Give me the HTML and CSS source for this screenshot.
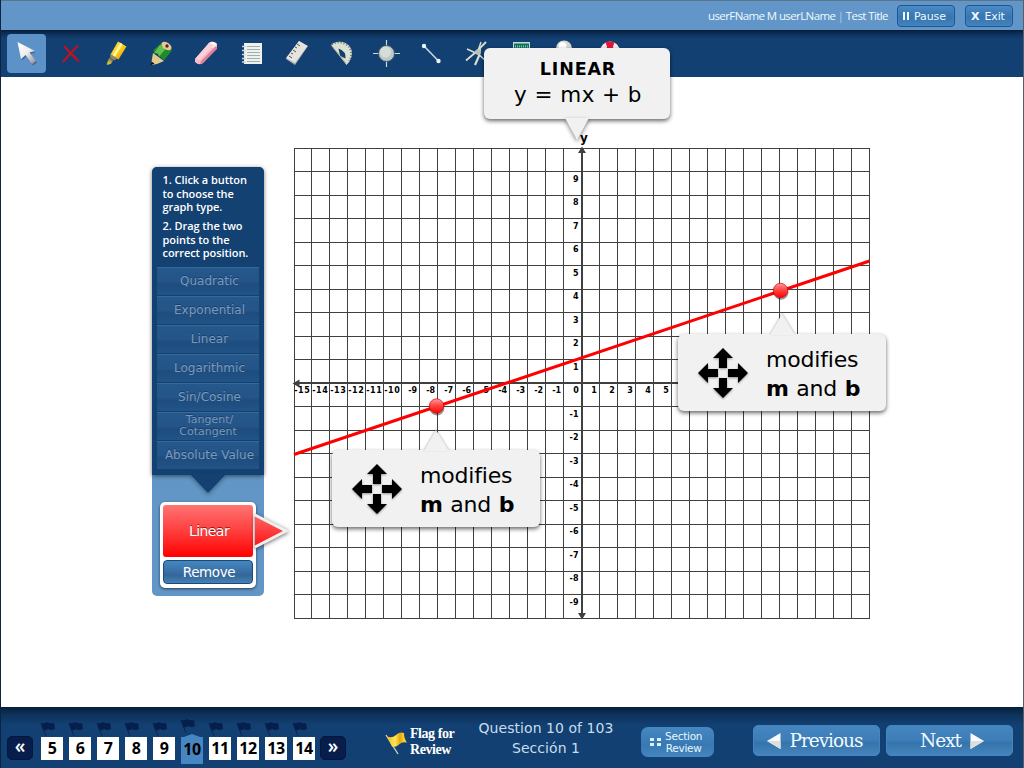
FILE: index.html
```html
<!DOCTYPE html>
<html lang="en">
<head>
<meta charset="utf-8">
<title>Test Title</title>
<link rel="stylesheet" href="styles.css">
</head>
<body>
<div class="app">
  <header class="topbar">
    <span class="user">userFName M userLName <i>|</i> Test Title</span>
    <button class="topbtn pause"><span class="bars"></span>Pause</button>
    <button class="topbtn exit"><b>X</b>Exit</button>
  </header>

  <nav class="tools">
    <svg class="tool selected" viewBox="0 0 39 39"><defs><linearGradient id="silver" x2="1" y2="1"><stop stop-color="#fff"/><stop offset=".5" stop-color="#eee"/><stop offset="1" stop-color="#8b8b90"/></linearGradient><linearGradient id="yellow" x2="1" y2="1"><stop stop-color="#ffd84a"/><stop offset=".5" stop-color="#ffd21c"/><stop offset="1" stop-color="#d18b00"/></linearGradient></defs><path d="M10.500 8L14 25l4.500-4 6.500 9 4-3-6.500-8.500 5.500-1.500z" fill="#17375f" opacity=".4" transform="translate(1 1.500)"/><path d="M10.500 8L14 25l4.500-4 6.500 9 4-3-6.500-8.500 5.500-1.500z" fill="url(#silver)"/></svg>
    <svg class="tool" viewBox="0 0 39 39"><path d="M12 12q7 8 15 15.500M26 11.500q-8 8-15 16.500" fill="none" stroke="#c8101b" stroke-width="2"/></svg>
    <svg class="tool" viewBox="0 0 39 39"><g transform="translate(-1 0)"><path d="M22 7.500l8.500 5-8 13-8-5z" fill="url(#yellow)"/><path d="M25.500 9.500l-8 13" stroke="#fff7a8" stroke-width="2.500"/><path d="M14.500 20l7 4.500-3.500 2-4-2.500z" fill="#8f8963"/><path d="M13 24l4 2.500-2 3.500-4.500.5z" fill="#99925a"/><path d="M12 27l3.500 1-1.500 2-3 1z" fill="#d5c02a"/></g></svg>
    <svg class="tool" viewBox="0 0 39 39"><path d="M11 19l11 8-7 3-6 1z" fill="#e2cb8c"/><path d="M19.500 9q3-1.500 7 1 4 3 3 7l-8 10q-1-4-4-4-1-4-5-3-1-3-1-4z" fill="#238a2c"/><path d="M18 11l-6 8q4-1 5 3.500l8-9z" fill="#61c052"/><ellipse cx="24.500" cy="12" rx="5.500" ry="3.500" transform="rotate(35 24.500 12)" fill="#e9c995"/><circle cx="25" cy="12" r="1.700" fill="#542922"/><path d="M9.500 27.500l3 2-4 2z" fill="#111"/></svg>
    <svg class="tool" viewBox="0 0 39 39"><path d="M22 9q4-3 8 1v4L16 29q-4 3-8-1v-3z" fill="#f7bdc9"/><path d="M14 27L28 13l2 0v2L16 29l-3 1z" fill="#e07f96"/><path d="M22 9q4-3 8 1l-4 4-6-2z" fill="#fff0ef"/><path d="M22 9L8 25l5 1 14-15z" fill="#fbd0d8"/></svg>
    <svg class="tool" viewBox="0 0 39 39"><path d="M12 9h18v21H12z" fill="#edf1ef"/><path d="M15 12.500h13M15 15.500h13M15 18.500h13M15 21.500h13M15 24.500h13M15 27.500h13" stroke="#8b9793" stroke-opacity=".75"/><path d="M10 12.500h4M10 16.500h4M10 20.500h4M10 24.500h4M10 28h4" stroke="#d5dad8" stroke-width="1.500"/></svg>
    <svg class="tool" viewBox="0 0 39 39"><path d="M22 7l9 5-13 19-9-6z" fill="#a9b0b3"/><path d="M22 7l8.500 5L18 29l-9-5z" fill="#e5e5de"/><path d="M20 10l3 2M18 13l2 1M16 16l3 2M14 19l2 1M12 22l3 2" stroke="#555"/></svg>
    <svg class="tool" viewBox="0 0 39 39"><path fill-rule="evenodd" d="M9 11C14 6 23 7 27.500 12q5 7 0 15.500L24.500 31z M16.500 14.500l1.500 7.500 5.500 2.500q1-7-7-10z" fill="#dde1d3"/><path d="M10 10.500C15 7 23 8 27 13q4.500 7 0 14" fill="none" stroke="#5d6d74" stroke-width="2" stroke-dasharray="1 2"/><path d="M10 12l14 17" stroke="#b8b695"/></svg>
    <svg class="tool" viewBox="0 0 39 39"><path d="M19.500 6v27M6 19.500h27" stroke="#c9dce0" stroke-width="1.200"/><circle cx="19.500" cy="19.500" r="8" fill="#b9c9c5" stroke="#456"/><circle cx="18.500" cy="18" r="5.500" fill="#d6dcd8"/></svg>
    <svg class="tool" viewBox="0 0 39 39"><path d="M12 12l14 14.500" stroke="#cad5dc" stroke-width="1.600"/><circle cx="12" cy="12" r="2.200" fill="#eaf6ff"/><circle cx="26.500" cy="27" r="2.200" fill="#eaf6ff"/></svg>
    <svg class="tool" viewBox="0 0 39 39"><g fill="none" stroke="#d9ddcf"><path d="M29 8L19 18l-10 8.500" stroke-width="1.800"/><path d="M23 14l-1 8-4 9" stroke-width="2.200"/><path d="M24 8l-3 9M10 15l11 5 8 7" stroke-width="1.500"/></g><circle cx="21" cy="18" r="2.800" fill="#b4c2bd"/></svg>
    <svg class="tool" viewBox="0 0 39 39"><path d="M11 8h17v24H11z" fill="#cad9d4"/><path d="M12 9.500h15v6H12z" fill="#176e62"/><path d="M13 12.500h13" stroke="#76d1a7" stroke-width="2" stroke-dasharray="1 1"/></svg>
    <svg class="tool" viewBox="0 0 39 39"><circle cx="17" cy="14.500" r="8" fill="#d4d6d3"/><circle cx="15.500" cy="12" r="4" fill="#fff"/></svg>
    <svg class="tool" viewBox="0 0 39 39"><circle cx="18" cy="17.500" r="7.500" fill="none" stroke="#f6eeee" stroke-width="5"/><path d="M13.500 8.500q4.500-2 9 0l-2 5.500h-5z" fill="#e3163a"/></svg>
  </nav>

  <main class="work">
    <aside class="panel">
      <section class="chooser">
        <p>1. Click a button<br>to choose the<br>graph type.</p>
        <p>2. Drag the two<br>points to the<br>correct position.</p>
        <div class="types">
          <button>Quadratic</button><button>Exponential</button><button>Linear</button><button>Logarithmic</button><button>Sin/Cosine</button><button class="two">Tangent/<br>Cotangent</button><button>Absolute Value</button>
        </div>
        <svg class="notch" viewBox="0 0 36 20"><path d="M0 0h36L18 19z" fill="#134171"/></svg>
      </section>
      <section class="chosen">
        <button class="current">Linear</button>
        <button class="remove">Remove</button>
        <svg class="pointer" viewBox="0 0 36 38"><defs><linearGradient id="redfill" x2="0" y2="1"><stop stop-color="#f66"/><stop offset="1" stop-color="#f11"/></linearGradient></defs><path d="M0 3l31 16L0 35z" fill="url(#redfill)"/><path d="M0 3l31 16L0 35" fill="none" stroke="#f0f0f0" stroke-width="3"/></svg>
      </section>
    </aside>

    <div class="plot">
      <svg class="graph" viewBox="294 130 577 490" id="graph">
        <defs><linearGradient id="dot" x2="0" y2="1"><stop stop-color="#ff9c9c"/><stop offset=".45" stop-color="#ff4747"/><stop offset="1" stop-color="#f00"/></linearGradient></defs>
        <g id="grid" class="grid"></g>
        <path class="axis" d="M582 151v465M296 383h573"/>
        <path class="head" d="M582 146.500l4 6.500h-8zM582 619.500l4-6.500h-8zM292.500 383.500l7-4v8z"/>
        <g id="labels" class="labels"></g>
        <text class="yname" x="580" y="142">y</text>
        <path class="curve" d="M294 454.500L869.500 261"/>
        <circle class="shade" cx="437" cy="408" r="7.500"/><circle class="dot" cx="436.500" cy="406" r="7.200"/>
        <circle class="shade" cx="781" cy="292.300" r="7.500"/><circle class="dot" cx="780.500" cy="290.500" r="7.200"/>
      </svg>
      <div class="callout formula"><strong>LINEAR</strong><span>y = mx + b</span><svg class="tail down" viewBox="0 0 24 23"><path d="M0 0h24L12 22z"/></svg></div>
      <div class="callout modify first"><svg class="tail up" viewBox="0 0 26 22"><path d="M12 1l13 21H0z"/></svg><svg class="move" viewBox="0 0 50 50"><path d="M25 0l10 10h-6v10h-8V10h-6zM25 50l10-10h-6V30h-8v10h-6zM0 25l10-10v6h10v8H10v6zM50 25L40 15v6H30v8h10v6z"/></svg><div>modifies<br><b>m</b> and <b>b</b></div></div>
      <div class="callout modify second"><svg class="tail up" viewBox="0 0 26 22"><path d="M12 1l13 21H0z"/></svg><svg class="move" viewBox="0 0 50 50"><path d="M25 0l10 10h-6v10h-8V10h-6zM25 50l10-10h-6V30h-8v10h-6zM0 25l10-10v6h10v8H10v6zM50 25L40 15v6H30v8h10v6z"/></svg><div>modifies<br><b>m</b> and <b>b</b></div></div>
    </div>
  </main>

  <footer class="bottom">
    <div class="pager">
      <button class="step">«</button>
      <div class="pages" id="pages"></div>
      <button class="step">»</button>
    </div>
    <div class="flagreview"><svg viewBox="0 0 23 24"><defs><linearGradient id="flag"><stop stop-color="#f7b914"/><stop offset=".4" stop-color="#ffe85a"/><stop offset=".65" stop-color="#e8a80c"/><stop offset="1" stop-color="#fff04b"/></linearGradient></defs><path d="M1 4l12 19" stroke="#d1cdb9" stroke-width="1.400"/><path d="M2 5.500q5 2 9-1.500t8-2q0 6 3 9.500-5-1-8 2t-7 2z" fill="url(#flag)"/></svg><span>Flag for<br>Review</span></div>
    <div class="progress">Question 10 of 103<br>Sección 1</div>
    <button class="section"><svg viewBox="0 0 12 9"><path d="M0 0h4v3H0zM7 0h4v3H7zM0 5h4v3H0zM7 5h4v3H7z" fill="#d9f2ff"/></svg><span>Section<br>Review</span></button>
    <button class="nav prev"><svg viewBox="0 0 14 16"><path d="M0 8L13.500 0v16z" fill="#fafafa"/><path d="M0 8h13.500v8z" fill="#dedede"/></svg>Previous</button>
    <button class="nav next">Next<svg viewBox="0 0 14 16"><path d="M14 8L.5 0v16z" fill="#fafafa"/><path d="M14 8H.5v8z" fill="#dedede"/></svg></button>
  </footer>
</div>
<script src="app.js"></script>
</body>
</html>
```
FILE: styles.css
```css
* { box-sizing: border-box; }
body { margin: 0; width: 1024px; height: 768px; overflow: hidden; background: #fff; font-family: "DejaVu Sans", sans-serif; }
button { margin: 0; padding: 0; font: inherit; color: inherit; border: 0; background: none; white-space: nowrap; }
p { margin: 0; }
svg { display: block; flex: none; overflow: visible; }
.app { width: 1024px; height: 768px; display: flex; flex-direction: column; border-left: 1px solid #0c2442; border-right: 1px solid #53606c; }
.topbar { height: 30px; flex: none; display: flex; align-items: center; justify-content: flex-end; padding: 1px 10px 0 0; background: #6296c8; border-top: 1px solid #5b7488; color: #eefaff; }
.user { font: 11.500px/20px "Open Sans", sans-serif; letter-spacing: -.6px; width: 179px; margin: -1px 10px 0 0; white-space: nowrap; }
.user i { font-style: normal; opacity: .5; }
.topbtn { height: 22px; display: flex; align-items: center; border: 1px solid #1b5593; border-radius: 4px; background: linear-gradient(#4b8ac5, #3876b1 55%, #4382bd); font-size: 11px; box-shadow: inset 0 0 0 1px #5292ca55; }
.pause { width: 58px; margin-right: 10px; padding-left: 5px; gap: 5px; letter-spacing: -.1px; }
.exit { width: 48px; padding-left: 5px; gap: 5px; letter-spacing: -.1px; }
.bars { width: 6px; height: 8px; border: solid #eaffff; border-width: 0 2px; }
.tools { height: 47px; flex: none; display: flex; align-items: flex-start; gap: 6px; padding: 4px 0 0 6px; background: linear-gradient(#081c36, #0d315b 4px, #124072 9px, #124072); }
.tool { width: 39px; height: 39px; border-radius: 4px; }
.selected { background: #5c92c7; }
.work { height: 630px; flex: none; display: flex; align-items: flex-start; background: #fff; }
.panel { width: 112px; height: 429px; margin: 90px 30px 0 151px; flex: none; background: #6296c7; border-radius: 5px; }
.chooser { position: relative; height: 308px; background: #134171; border-radius: 5px 5px 0 0; padding: 6px 5px 0; box-shadow: 0 1px 4px #0008; color: #fff; }
.chooser p { font: 600 11px/13.500px "Open Sans", sans-serif; margin: 0 0 5.500px 5.500px; white-space: nowrap; letter-spacing: -.06px; }
.types { display: flex; flex-direction: column; gap: 1px; margin-top: 7px; }
.types button { height: 28px; background: linear-gradient(#26588c, #245488 50%, #1e4c7e 60%, #225487); border-top: 1px solid #35699c; color: #7b9abb; font-size: 12px; text-indent: 3px; text-shadow: 0 -1px #163f6b; }
.types .two { font-size: 11px; line-height: 12px; }
.notch { position: absolute; left: 38px; top: 307px; width: 36px; height: 20px; filter: drop-shadow(0 2px 2px #0005); }
.chosen { position: relative; width: 96px; height: 86px; margin: 27px 0 0 8px; padding: 3px; background: #fff; border-radius: 5px; box-shadow: 0 1px 3px #0009; color: #fff; }
.chosen button { display: block; width: 90px; position: relative; text-indent: 2px; }
.current { height: 52px; background: linear-gradient(#ff7474, #ff3838 55%, #f00); border-radius: 3px; font-size: 14px; letter-spacing: -.55px; text-shadow: 0 -1px #0008; }
.chosen .remove { height: 24px; margin-top: 3px; font-size: 13.500px; letter-spacing: -.4px; border: 1px solid #174a7c; border-radius: 4px; background: linear-gradient(#4687c0, #34679a 65%, #4780b1); }
.pointer { position: absolute; left: 95px; top: 10px; width: 36px; height: 38px; filter: drop-shadow(0 1px 2px #0009); }
.plot { position: relative; width: 577px; height: 490px; margin-top: 53px; flex: none; }
.graph { width: 577px; height: 490px; }
.grid { stroke: #404040; stroke-width: 1; shape-rendering: crispEdges; }
.axis { stroke: #404040; stroke-width: 2; shape-rendering: crispEdges; }
.head { fill: #404040; }
.labels { font: bold 8px "DejaVu Sans", sans-serif; }
.yname { font: bold 12px "DejaVu Sans", sans-serif; }
.curve { stroke: #f00; stroke-width: 3; }
.dot { fill: url(#dot); stroke: #d60000; stroke-width: .7; }
.shade { fill: #0006; }
.callout { position: absolute; background: #f1f1f1; border-radius: 6px; box-shadow: 0 2px 4px #0009; color: #000; }
.formula { left: 190px; top: -82px; width: 186px; height: 71px; padding-top: 9px; display: flex; flex-direction: column; align-items: center; }
.formula strong { font-size: 17.500px; line-height: 24px; letter-spacing: .85px; margin-left: 2px; }
.formula span { font-size: 21.500px; line-height: 27px; letter-spacing: .45px; margin-left: 2px; }
.tail { position: absolute; fill: #f1f1f1; }
.down { left: 81px; top: 70px; width: 24px; height: 23px; filter: drop-shadow(0 2px 2px #0007); }
.up { left: 92px; top: -21px; width: 26px; height: 22px; filter: drop-shadow(0 -1px 1px #0004); }
.modify { width: 208px; height: 77px; display: flex; padding: 14px 0 0 19.500px; gap: 18px; font-size: 22px; line-height: 29px; letter-spacing: -.2px; word-spacing: .8px; white-space: nowrap; }
.modify div { margin: -3px 0 0 .5px; }
.first { left: 38px; top: 320px; }
.second { left: 384px; top: 204px; }
.move { width: 50px; height: 50px; filter: drop-shadow(0 1px 1px #0006); }
.bottom { height: 61px; flex: none; display: flex; align-items: flex-start; background: linear-gradient(#081e38, #0d315a 7px, #124072 18px); color: #c9ddec; }
.pager { display: flex; padding: 29px 0 0 6px; width: 384px; }
.step { width: 26px; height: 24px; border-radius: 5px; background: #071d4c; border: 1px solid #051638; color: #fff; font: 600 19px/16px "Open Sans", sans-serif; padding-bottom: 4px; }
.pages { display: flex; gap: 6px; margin: 1px 5px 0 8px; }
.page { position: relative; width: 22px; height: 23px; background: #fff; color: #000; text-align: center; font: bold 16px/23px "Open Sans", sans-serif; letter-spacing: -.4px; }
.page svg { position: absolute; left: -1px; top: -16px; width: 16px; height: 16px; }
.page.on { height: 27px; background: #4586c3; line-height: 25px; }
.page.on::before { content: ""; position: absolute; left: 0; top: -3px; width: 22px; height: 4px; background: #4586c3; clip-path: polygon(50% 0, 100% 100%, 0 100%); }
.page.on svg { top: -19px; }
.flagreview { display: flex; width: 77px; padding-top: 19px; color: #fff; }
.flagreview svg { width: 23px; height: 24px; margin-top: 5px; }
.flagreview span { font: bold 14px/15.500px "Liberation Serif", serif; letter-spacing: -.45px; margin-left: 2px; white-space: nowrap; }
.progress { width: 168px; padding-top: 11px; text-align: center; font-size: 14px; line-height: 20px; letter-spacing: .05px; white-space: nowrap; }
.section { width: 73px; height: 30px; margin: 20px 39px 0 11px; display: flex; align-items: center; gap: 3px; padding-left: 9px; border-radius: 7px; background: linear-gradient(#4688c2, #3878b3 60%, #4686bf); color: #e5f8ff; font-size: 10.500px; line-height: 12px; letter-spacing: -.25px; text-align: center; }
.section svg { width: 12px; height: 9px; }
.nav { width: 127px; height: 31px; margin-top: 18px; border-radius: 5px; background: linear-gradient(#4585c0, #3c7db8 50%, #3573ab 58%, #4684bd); border: 1px solid #4485bf; color: #f1faff; font: 18.500px "DejaVu Serif", serif; display: flex; align-items: center; justify-content: center; gap: 9px; letter-spacing: -1.050px; }
.nav svg { width: 14px; height: 16px; }
.prev { padding-right: 4px; }
.next { margin-left: 6px; padding-left: 5px; }
```
FILE: app.js
```js
const grid = document.getElementById('grid');
let lines = '';
for (let i = 0; i <= 32; i++) {
  const x = Math.floor(294 + i * 17.98) + .5;
  lines += `<path d="M${x} 148V619"/>`;
}
for (let i = 0; i <= 20; i++) {
  const y = Math.floor(148 + i * 23.5) + .5;
  lines += `<path d="M294 ${y}H870"/>`;
}
grid.innerHTML = lines;

let text = '';
for (let n = -15; n <= 5; n++) {
  const x = n >= 0 ? 576 + 18 * n : n > -10 ? 574.7 + 18 * n : 572 + 18 * n;
  const fit = n <= -10 ? ' textLength="15.500"' : '';
  text += `<text x="${x}" y="393" text-anchor="middle"${fit}>${n}</text>`;
}
for (let n = -9; n <= 9; n++) {
  if (n !== 0) text += `<text x="578.500" y="${393.5 - 23.5 * n - .3}" text-anchor="end">${n}</text>`;
}
document.getElementById('labels').innerHTML = text;

let pages = '';
for (let n = 5; n <= 14; n++) {
  pages += `<div class="page${n === 10 ? ' on' : ''}">${n}<svg viewBox="0 0 16 16"><path d="M1 2l5 13" stroke="#0b2452"/><path d="M1 2q3 1 6-1 4 2 7 1l1 6q-4 2-7 0-2 2-5 1z" fill="#071f4d"/></svg></div>`;
}
document.getElementById('pages').innerHTML = pages;
```
